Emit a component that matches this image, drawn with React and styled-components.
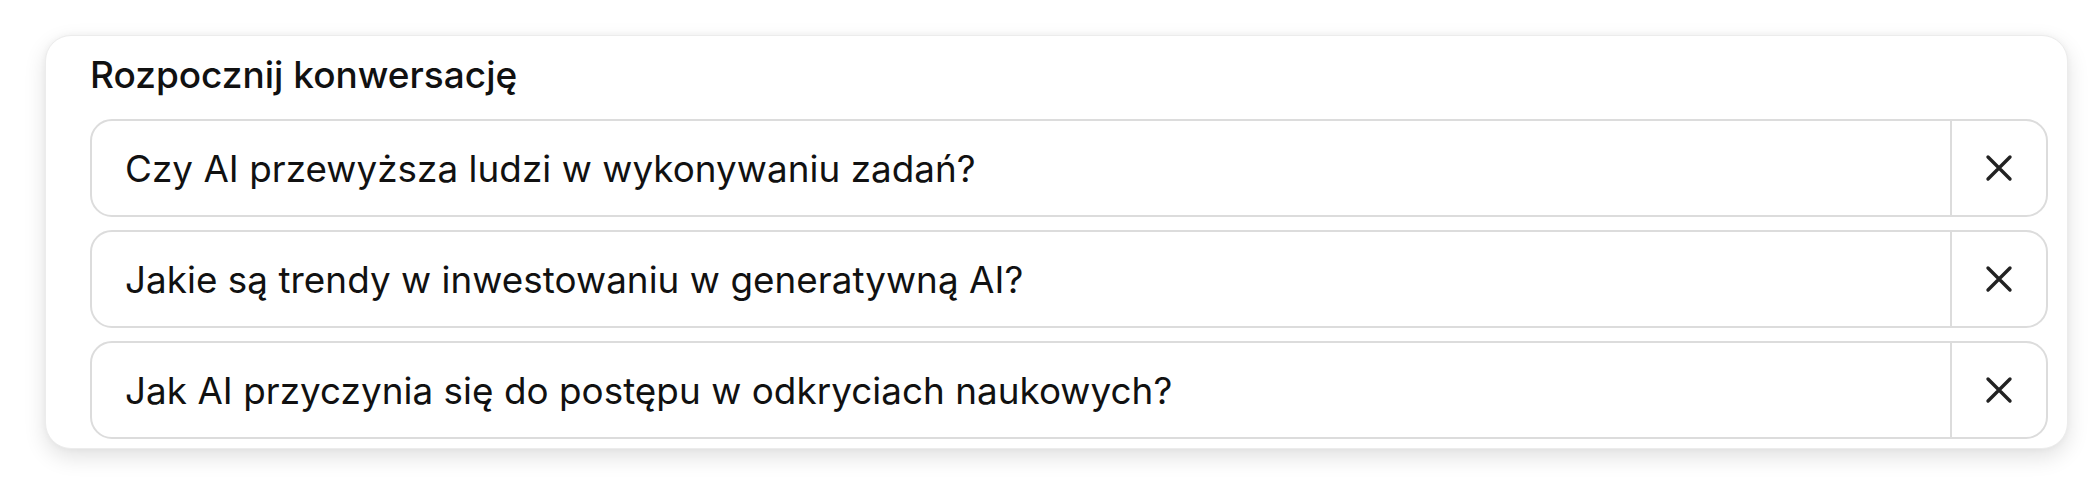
import React from 'react'
import styled, { createGlobalStyle } from 'styled-components'

const GlobalStyle = createGlobalStyle`
  html, body {
    margin: 0;
    padding: 0;
    background: #fff;
  }
  body {
    font-family: Inter, "Noto Sans", "Liberation Sans", sans-serif;
    color: #111;
  }
`

const Page = styled.div`
  padding: 35px 31px 40px 45px;
`

const Card = styled.section`
  background: #fff;
  border: 1px solid #ececec;
  border-radius: 26px;
  box-shadow: 0 8px 22px rgba(0, 0, 0, 0.12), 0 0 6px rgba(0, 0, 0, 0.04);
  padding: 17px 19px 9px 44px;
`

const Title = styled.h2`
  margin: 0 0 22px;
  font-size: 37px;
  line-height: 44px;
  font-weight: 500;
  color: #111;
`

const List = styled.div`
  display: flex;
  flex-direction: column;
  gap: 13px;
`

const Row = styled.div`
  display: flex;
  height: 98px;
  box-sizing: border-box;
  border: 2px solid #dcdcdc;
  border-radius: 22px;
  overflow: hidden;
`

const Prompt = styled.button`
  flex: 1;
  display: flex;
  align-items: center;
  padding: 0 0 0 33px;
  border: 0;
  background: transparent;
  font: inherit;
  font-size: 36.8px;
  letter-spacing: 0.05px;
  color: #111;
  text-align: left;
  cursor: pointer;
`

const Close = styled.button`
  width: 96px;
  flex: none;
  display: flex;
  align-items: center;
  justify-content: center;
  border: 0;
  border-left: 2px solid #dcdcdc;
  background: transparent;
  color: #222;
  cursor: pointer;
`

const CloseIcon = () => (
  <svg width="28" height="28" viewBox="0 0 28 28" fill="none">
    <path
      d="M3 3L25 25M25 3L3 25"
      stroke="currentColor"
      strokeWidth="3.4"
      strokeLinecap="round"
    />
  </svg>
)

const prompts = [
  'Czy AI przewyższa ludzi w wykonywaniu zadań?',
  'Jakie są trendy w inwestowaniu w generatywną AI?',
  'Jak AI przyczynia się do postępu w odkryciach naukowych?',
]

export default function App() {
  return (
    <>
      <GlobalStyle />
      <Page>
        <Card>
          <Title>Rozpocznij konwersację</Title>
          <List>
            {prompts.map((p) => (
              <Row key={p}>
                <Prompt>{p}</Prompt>
                <Close aria-label="Usuń">
                  <CloseIcon />
                </Close>
              </Row>
            ))}
          </List>
        </Card>
      </Page>
    </>
  )
}
